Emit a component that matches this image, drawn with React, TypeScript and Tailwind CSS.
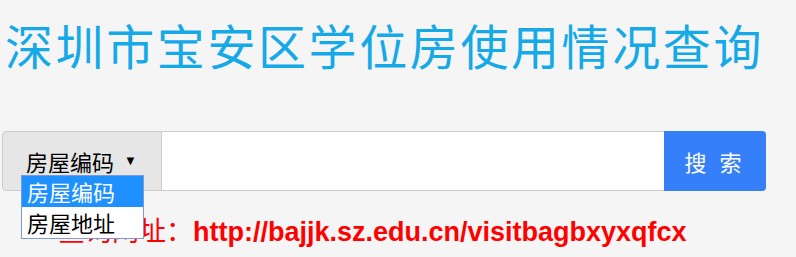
import React from 'react';

const options = ['房屋编码', '房屋地址'];

export default function App() {
  return (
    <div className="w-[796px] h-[257px] overflow-hidden bg-[#f5f5f5] font-['Liberation_Sans','Noto_Sans_CJK_SC',sans-serif]">
      <h1 className="pl-[5px] pt-[17px] text-[48px] leading-[54px] font-normal tracking-[2.6px] whitespace-nowrap text-[#15a9e8] font-['Noto_Sans_CJK_SC',serif]">
        深圳市宝安区学位房使用情况查询
      </h1>

      <div className="mt-[60px] ml-[2px] flex h-[60px] w-[764px]">
        <div className="relative flex w-[160px] items-center rounded-l-[4px] border border-[#cccccc] bg-[#e6e6e6] pl-[23px]">
          <span className="text-[22px] text-black font-['Noto_Sans_CJK_SC',sans-serif]">房屋编码</span>
          <span className="ml-[10px] text-[13px] text-black">▼</span>

          {/* open native select list */}
          <ul className="absolute left-[18px] top-[43px] z-10 w-[123px] border border-[#7a9cd3] bg-white font-['Noto_Sans_CJK_SC',sans-serif] text-[22px] leading-[31px]">
            {options.map((o, i) => (
              <li key={o} className={i === 0 ? 'bg-[#1e90ff] pl-[5px] text-white' : 'pl-[5px] text-black'}>
                {o}
              </li>
            ))}
          </ul>
        </div>
        <input className="flex-1 border-y border-[#cccccc] bg-white outline-none" />
        <button className="w-[102px] rounded-r-[4px] bg-[#3580f8] text-[22px] tracking-[4px] text-white font-['Noto_Sans_CJK_SC',sans-serif]">
          搜 索
        </button>
      </div>

      <p className="mt-[24px] pl-[58px] text-[27px] leading-[30px] whitespace-nowrap text-[#ff0000]">
        <span className="font-['Noto_Sans_CJK_SC',serif] font-normal">查询网址：</span>
        <span className="font-bold">http://bajjk.sz.edu.cn/visitbagbxyxqfcx</span>
      </p>
    </div>
  );
}
